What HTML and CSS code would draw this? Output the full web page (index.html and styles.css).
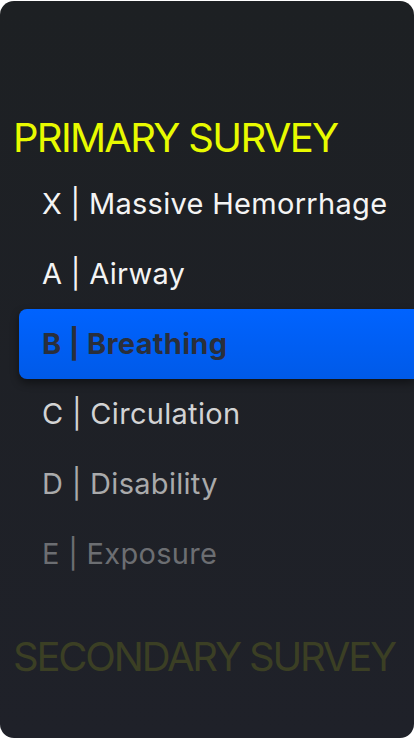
FILE: index.html
```html
<!DOCTYPE html>
<html>
<head>
<meta charset="utf-8">
<link rel="stylesheet" href="styles.css">
</head>
<body>
<div class="card">
  <h1 class="title primary">PRIMARY SURVEY</h1>
  <ul class="list">
    <li class="row c1">X | Massive Hemorrhage</li>
    <li class="row c1">A | Airway</li>
    <li class="row active">B | Breathing</li>
    <li class="row c3">C | Circulation</li>
    <li class="row c4">D | Disability</li>
    <li class="row c5">E | Exposure</li>
  </ul>
  <h2 class="title secondary">SECONDARY SURVEY</h2>
</div>
</body>
</html>
```

FILE: styles.css
```css
html, body {
  margin: 0;
  padding: 0;
  background: #ffffff;
}
.card {
  margin-top: 1px;
  height: 737px;
  width: 414px;
  border-radius: 14px;
  background: linear-gradient(180deg, #1d2023 0%, #1f2129 100%);
  overflow: hidden;
  padding-top: 113px;
  box-sizing: border-box;
  font-family: Inter, "Noto Sans", sans-serif;
}
.title {
  margin: 0;
  padding-left: 13px;
  font-size: 40px;
  font-weight: 400;
  line-height: 48px;
  white-space: nowrap;
}
.primary { color: #e8fa00; letter-spacing: -1.7px; }
.secondary { color: #3b3f24; margin-top: 44px; letter-spacing: -2.2px; }
.list {
  list-style: none;
  margin: 7px 0 0 19px;
  padding: 0;
}
.row {
  height: 70px;
  line-height: 70px;
  padding-left: 23px;
  font-size: 29px;
  letter-spacing: 0.3px;
  white-space: nowrap;
  border-radius: 8px 0 0 8px;
}
.c1 { color: #f4f4f4; }
.c3 { color: #d2d3d4; }
.c4 { color: #a9aaab; }
.c5 { color: #6c6e72; }
.active {
  background: linear-gradient(180deg, #0063ff 0%, #005ae8 100%);
  color: #2a2f3b;
  font-weight: 700;
  box-shadow: 0 4px 8px rgba(0, 0, 0, 0.45);
}
```
